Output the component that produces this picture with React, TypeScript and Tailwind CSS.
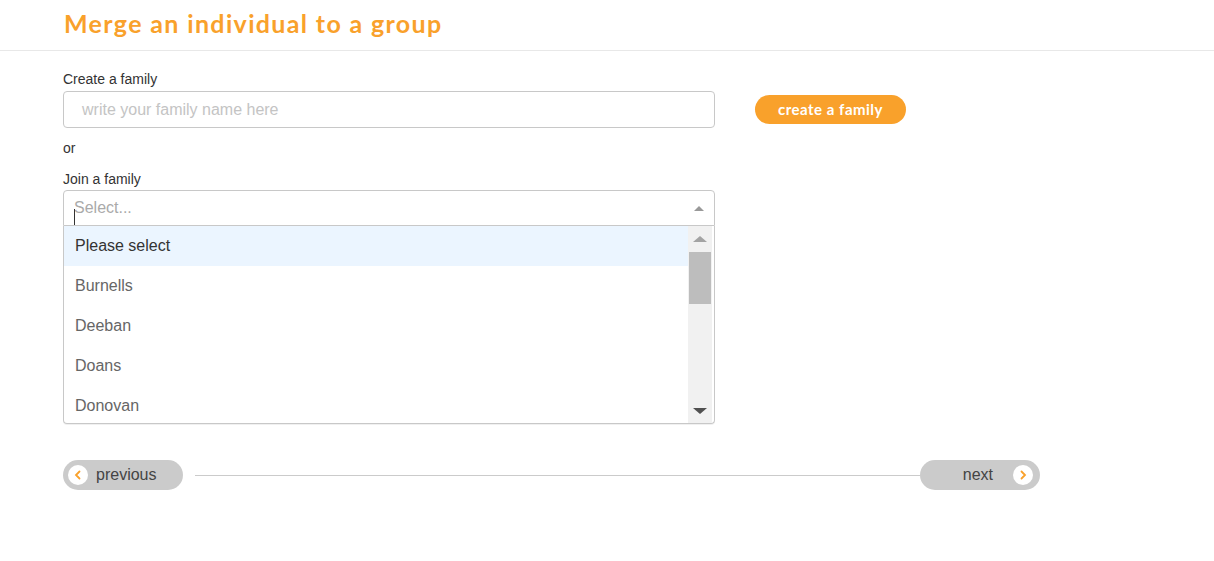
import React from "react";

export default function App() {
  const options = ["Please select", "Burnells", "Deeban", "Doans", "Donovan"];
  return (
    <div className="w-[1214px] h-[561px] bg-white" style={{ fontFamily: '"Liberation Sans", Arial, sans-serif' }}>
      <div className="h-[51px] border-b border-[#e8e8e8] pl-[64px] flex items-start pt-[7px]">
        <h1 className="text-[25px] font-bold text-[#f9a12b] leading-[32px] tracking-[1.35px]" style={{ fontFamily: '"Lato", sans-serif' }}>
          Merge an individual to a group
        </h1>
      </div>
      <div className="pl-[63px] pt-[20px]">
        <div className="text-[14px] text-[#333] leading-[16px]">Create a family</div>
        <div className="flex items-center mt-[4px]">
          <div className="w-[652px] h-[37px] border border-[#c8c8c8] rounded-[4px] flex items-center pl-[18px]">
            <span className="text-[16px] text-[#c4c4c4]">write your family name here</span>
          </div>
          <button className="ml-[40px] h-[29px] w-[151px] rounded-full bg-[#f9a12b] text-white text-[15px] font-bold tracking-[0.5px]" style={{ fontFamily: '"Lato", sans-serif' }}>
            create a family
          </button>
        </div>
        <div className="text-[14px] text-[#333] mt-[12px] leading-[16px]">or</div>
        <div className="text-[14px] text-[#333] leading-[16px] mt-[15px]">Join a family</div>
        <div className="w-[652px] mt-[3px]">
          <div className="h-[36px] border border-[#c8c8c8] rounded-t-[4px] flex items-center relative pl-[10px]">
            <span className="text-[16px] text-[#aaa]">Select...</span>
            <span className="absolute left-[10px] top-[18px] w-px h-[16px] bg-[#333]" />
            <span className="absolute right-[10px] top-[15px] w-0 h-0 border-l-[5px] border-r-[5px] border-b-[5px] border-l-transparent border-r-transparent border-b-[#999]" />
          </div>
          <div className="h-[198px] border border-t-0 border-[#c8c8c8] rounded-b-[4px] flex overflow-hidden shadow-[0_1px_0_rgba(0,0,0,0.06)]">
            <div className="flex-1">
              {options.map((o, i) => (
                <div
                  key={o}
                  className={`h-[40px] flex items-center pl-[11px] text-[16px] ${i === 0 ? "bg-[#ebf5ff] text-[#333]" : "text-[#666]"}`}
                >
                  {o}
                </div>
              ))}
            </div>
            <div className="w-[24px] mr-[2px] bg-[#f1f1f1] flex flex-col items-center">
              <div className="h-[26px] flex items-center justify-center">
                <span className="w-0 h-0 border-l-[7px] border-r-[7px] border-b-[6px] border-l-transparent border-r-transparent border-b-[#a3a3a3]" />
              </div>
              <div className="w-[22px] h-[52px] bg-[#bdbdbd]" />
              <div className="flex-1" />
              <div className="h-[24px] flex items-center justify-center">
                <span className="w-0 h-0 border-l-[7px] border-r-[7px] border-t-[6px] border-l-transparent border-r-transparent border-t-[#505050]" />
              </div>
            </div>
          </div>
        </div>
        <div className="flex items-center mt-[36px] w-[977px]">
          <div className="h-[30px] w-[120px] rounded-full bg-[#cbcbcb] flex items-center pl-[5px]">
            <div className="w-[20px] h-[20px] rounded-full bg-white flex items-center justify-center">
              <svg width="10" height="10" viewBox="0 0 10 10"><path d="M6.5 1.5 L3 5 L6.5 8.5" stroke="#f9a12b" strokeWidth="1.8" fill="none" strokeLinecap="round" /></svg>
            </div>
            <span className="ml-[8px] text-[16px] text-[#444]">previous</span>
          </div>
          <div className="flex-1 h-px bg-[#cbcbcb] ml-[12px]" />
          <div className="h-[30px] w-[120px] rounded-full bg-[#cbcbcb] flex items-center justify-end pr-[7px]">
            <span className="mr-[20px] text-[16px] text-[#444]">next</span>
            <div className="w-[20px] h-[20px] rounded-full bg-white flex items-center justify-center">
              <svg width="10" height="10" viewBox="0 0 10 10"><path d="M3.5 1.5 L7 5 L3.5 8.5" stroke="#f9a12b" strokeWidth="1.8" fill="none" strokeLinecap="round" /></svg>
            </div>
          </div>
        </div>
      </div>
    </div>
  );
}
